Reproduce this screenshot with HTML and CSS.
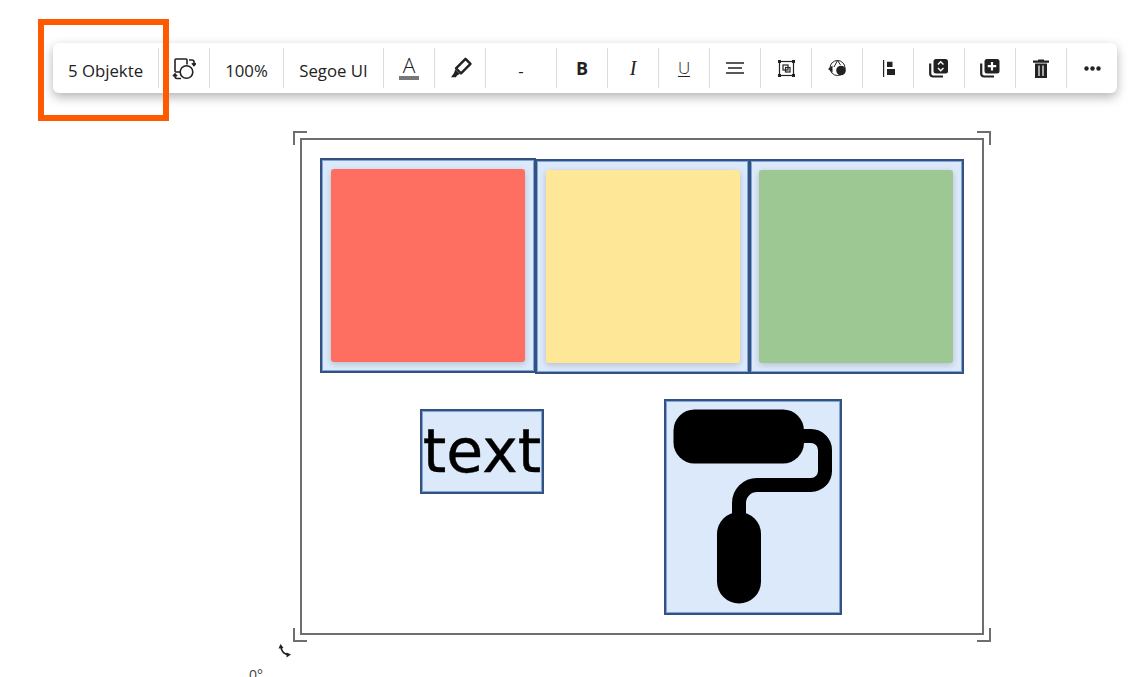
FILE: index.html
```html
<!DOCTYPE html>
<html lang="en">
<head>
  <meta charset="UTF-8" />
  <title>Whiteboard – 5 Objekte</title>
  <link rel="stylesheet" href="styles.css">
</head>
<body>
  <div class="toolbar">
    <div class="cell cell-text cell-count">5 Objekte</div>
    <div class="cell">
      <svg width="24" height="24" viewBox="0 0 24 24" fill="none" stroke="#222" stroke-width="1.6">
        <path d="M8 16H4a1 1 0 0 1-1-1V4a1 1 0 0 1 1-1H14a1 1 0 0 1 1 1V8.500" />
        <circle cx="14.500" cy="16" r="6.300" />
        <path d="M17 4h3a2 2 0 0 1 2 2v3M19.900 7.300L22 9.500L24 7.300" />
        <path d="M9 22.500H5a2 2 0 0 1-2-2V18M.9 20.200L3 18L5 20.200" />
      </svg>
    </div>
    <div class="cell cell-text cell-zoom">100%</div>
    <div class="cell cell-text cell-font">Segoe UI</div>
    <div class="cell">
      <div class="font-color"><span>A</span><i></i></div>
    </div>
    <div class="cell">
      <svg class="marker-icon" width="24" height="24" viewBox="0 0 24 24" fill="none" stroke="#222" stroke-width="2.400">
        <path d="M16.500 2.800L21.500 7.800L12 17.300L7 12.300Z" stroke-linejoin="round" />
        <path d="M6.300 13.500L10.800 18L8 19.500L7 21.300H2L5 17Z" fill="#222" stroke="none" />
      </svg>
    </div>
    <div class="cell cell-text cell-size">-</div>
    <div class="cell"><span class="fmt-bold">B</span></div>
    <div class="cell"><span class="fmt-italic">I</span></div>
    <div class="cell"><span class="fmt-under">U</span></div>
    <div class="cell">
      <svg width="18" height="12" viewBox="0 0 18 12" fill="none" stroke="#222" stroke-width="1.400">
        <path d="M0 1H18M2 6H16M0 11H18" />
      </svg>
    </div>
    <div class="cell">
      <svg width="17" height="17" viewBox="0 0 17 17" fill="none" stroke="#222" stroke-width="1.200">
        <rect x="1.500" y="1.500" width="14" height="14" />
        <rect x="5" y="5" width="5" height="5" />
        <rect x="7.500" y="7.500" width="4.500" height="4.500" />
        <path d="M0 0h3v3h-3zM14 0h3v3h-3zM0 14h3v3h-3zM14 14h3v3h-3z" fill="#222" stroke="none" />
      </svg>
    </div>
    <div class="cell">
      <svg width="18" height="18" viewBox="0 0 18 18" fill="none" stroke="#222" stroke-width="1">
        <circle cx="9.500" cy="9" r="7.500" />
        <path d="M9.500 1.500L6 8M9.500 1.500L12.500 6" />
        <circle cx="13" cy="11.500" r="4.800" fill="#222" stroke="none" />
        <path d="M0 10L4.500 6.500V13.500Z" fill="#222" stroke="none" />
      </svg>
    </div>
    <div class="cell">
      <svg width="13" height="17" viewBox="0 0 13 17">
        <path d="M1 0h1.200v17H1zM5 1.700h5.500V7H5zM5 9h8v6H5z" fill="#222" />
      </svg>
    </div>
    <div class="cell">
      <svg width="20" height="20" viewBox="0 0 20 20" fill="none">
        <path d="M1.200 5.500V15.500A3 3 0 0 0 4.200 18.500H14" stroke="#222" stroke-width="2.200" />
        <rect x="4.500" y="1" width="14.500" height="14.500" rx="2.500" fill="#222" />
        <path d="M9 6.500L11.700 3.800L14.500 6.500M9 10L11.700 12.700L14.500 10" stroke="#fff" stroke-width="1.400" />
      </svg>
    </div>
    <div class="cell">
      <svg width="20" height="20" viewBox="0 0 20 20" fill="none">
        <path d="M1.200 5.500V15.500A3 3 0 0 0 4.200 18.500H14" stroke="#222" stroke-width="2.200" />
        <rect x="4.500" y="1" width="15" height="14.500" rx="2.500" fill="#222" />
        <path d="M12 4V12.500M7.800 8.200H16.200" stroke="#fff" stroke-width="2.200" />
      </svg>
    </div>
    <div class="cell">
      <svg width="16" height="19" viewBox="0 0 16 19">
        <path d="M5 1.500V.5h6v1h5v2.200H0V1.500z" fill="#222" />
        <path d="M2 4.500h12V19H2z" fill="#222" />
        <path d="M6 6.500V17M10 6.500V17" stroke="#fff" stroke-width="1.200" />
      </svg>
    </div>
    <div class="cell">
      <svg width="17" height="5" viewBox="0 0 17 5" fill="#222">
        <circle cx="2.500" cy="2.500" r="2.200" />
        <circle cx="8.500" cy="2.500" r="2.200" />
        <circle cx="14.500" cy="2.500" r="2.200" />
      </svg>
    </div>
  </div>

  <div class="highlight-box"></div>

  <!-- selection frame and handles -->
  <div class="frame"></div>
  <div class="corner corner-tl"></div>
  <div class="corner corner-tr"></div>
  <div class="corner corner-bl"></div>
  <div class="corner corner-br"></div>

  <svg class="rotate-handle" width="14" height="14" viewBox="0 0 14 14" fill="none">
    <path d="M3 3C3.500 7 6 10 10 10.500" stroke="#222" stroke-width="1.800" />
    <path d="M2.500 0L5.500 4L.5 4.500ZM13 10.500L8.500 13.500L8.500 8.500Z" fill="#222" />
  </svg>
  <div class="rotate-label">0°</div>

  <!-- selected objects -->
  <div class="node node-red"><div class="note note-red"></div></div>
  <div class="node node-yellow"><div class="note note-yellow"></div></div>
  <div class="node node-green"><div class="note note-green"></div></div>
  <div class="node node-text">text</div>
  <div class="node node-roller">
    <svg width="174" height="212" viewBox="666 401 174 212">
      <rect x="673.500" y="409.500" width="130.500" height="54" rx="21" fill="#000" />
      <path d="M800 436H811A14 14 0 0 1 825 450V471A14 14 0 0 1 811 485H757A18 18 0 0 0 739 503V520" fill="none" stroke="#000" stroke-width="14" />
      <rect x="717" y="512" width="44" height="91.500" rx="22" fill="#000" />
    </svg>
  </div>
</body>
</html>
```

FILE: styles.css
```css
html, body {
  margin: 0;
  height: 100%;
}
body {
  position: relative;
  height: 677px;
  overflow: hidden;
  background: #fff;
  font-family: "Open Sans", sans-serif;
  color: #222;
}

/* toolbar */
.toolbar {
  display: flex;
  width: 1064px;
  height: 50px;
  box-sizing: border-box;
  margin: 43px 0 0 53px;
  padding: 5px 0;
  background: #fff;
  border-radius: 6px;
  box-shadow: 0 4px 11px rgba(0, 0, 0, 0.3);
  font-size: 16.8px;
}
.cell {
  display: flex;
  align-items: center;
  justify-content: center;
  width: 51px;
  box-sizing: border-box;
  border-left: 1px solid #dcdcdc;
}
.cell-text {
  padding-top: 5px;
}
.cell-count {
  width: 105px;
  border-left: 0;
}
.cell-zoom {
  width: 74px;
}
.cell-font {
  width: 100px;
}
.cell-size {
  width: 71px;
}
.font-color {
  display: flex;
  flex-direction: column;
  align-items: center;
  width: 20px;
  margin-bottom: 2px;
}
.font-color span {
  font-size: 21px;
  font-weight: 300;
  line-height: 20px;
}
.font-color i {
  display: block;
  width: 100%;
  height: 4px;
  margin-top: 1px;
  background: #777;
}
.marker-icon {
  margin-left: 2px;
}
.fmt-bold {
  font-size: 18px;
  font-weight: 700;
}
.fmt-italic {
  font-family: "Liberation Serif", serif;
  font-size: 20px;
  font-style: italic;
}
.fmt-under {
  padding-bottom: 2px;
  font-size: 17px;
  font-weight: 300;
  text-decoration: underline;
  text-decoration-thickness: 1px;
  text-underline-offset: 2px;
}

/* orange marker round the first toolbar cell */
.highlight-box {
  position: absolute;
  left: 38px;
  top: 19px;
  width: 119px;
  height: 90px;
  border: 6px solid #ff5a00;
}

/* selection frame */
.frame {
  position: absolute;
  left: 300px;
  top: 138px;
  width: 680px;
  height: 493px;
  border: 2px solid #6e6e6e;
}
.corner {
  position: absolute;
  width: 12px;
  height: 12px;
  border: 0 solid #6e6e6e;
}
.corner-tl {
  left: 293px;
  top: 131px;
  border-width: 2px 0 0 2px;
}
.corner-tr {
  left: 977px;
  top: 131px;
  border-width: 2px 2px 0 0;
}
.corner-bl {
  left: 293px;
  top: 628px;
  border-width: 0 0 2px 2px;
}
.corner-br {
  left: 977px;
  top: 628px;
  border-width: 0 2px 2px 0;
}
.rotate-handle {
  position: absolute;
  left: 278px;
  top: 644px;
}
.rotate-label {
  position: absolute;
  left: 249px;
  top: 665px;
  font-size: 14px;
  color: #444;
}

/* objects on the canvas */
.node {
  position: absolute;
  display: flex;
  align-items: center;
  justify-content: center;
  box-sizing: border-box;
  background: #dce9fa;
  border: 2px solid #34527d;
  box-shadow: inset 0 0 0 1px #7fa6dc;
}
.node-red {
  left: 320px;
  top: 158px;
  width: 216px;
  height: 215px;
}
.node-yellow {
  left: 535px;
  top: 159px;
  width: 215px;
  height: 215px;
}
.node-green {
  left: 749px;
  top: 159px;
  width: 215px;
  height: 215px;
  padding-right: 2px;
}
.node-text {
  left: 420px;
  top: 409px;
  width: 124px;
  height: 85px;
  font-family: "DejaVu Sans", sans-serif;
  font-size: 60px;
  line-height: 81px;
  color: #000;
  -webkit-text-stroke: 0.4px #000;
}
.node-roller {
  left: 664px;
  top: 399px;
  width: 178px;
  height: 216px;
}
.note {
  width: 194px;
  height: 193px;
  border-radius: 3px;
  box-shadow: 0 2px 6px rgba(0, 0, 0, 0.18);
}
.note-red {
  background: #ff6f61;
}
.note-yellow {
  background: #fee898;
}
.note-green {
  background: #9dc894;
}
```
